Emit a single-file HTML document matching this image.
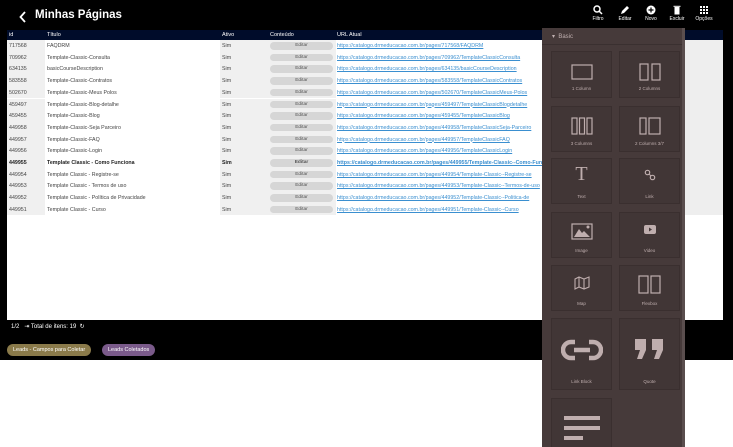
<!DOCTYPE html>
<html><head><meta charset="utf-8"><style>
*{margin:0;padding:0;box-sizing:border-box}
html,body{width:733px;height:447px;overflow:hidden}
body{background:#fff;font-family:"Liberation Sans",sans-serif;position:relative}
.top{position:absolute;left:0;top:0;width:733px;height:360px;background:#000}
.title{position:absolute;top:9px;color:#fff;font-size:11.5px;font-weight:bold}
.tb{position:absolute;top:5px;color:#fff;font-size:5px;text-align:center;width:24px}
.tb svg{display:block;margin:0 auto 1px}
.area{position:absolute;left:7px;top:30px;width:716px;height:290px;background:#fff}
.hdr{position:absolute;left:0;top:0;width:716px;height:10px;background:#000c2a;color:#fff;font-size:5.5px}
.hdr span,.row span{position:absolute;top:2px;white-space:nowrap}
.row{position:absolute;left:0;width:716px;height:11.7px;font-size:5.3px;color:#444}
.row span{top:3px}
.g{position:absolute;top:0;height:11.7px;background:#f0f0f0}
.btn{position:absolute;left:263px;top:2px;width:63px;height:7.5px;background:#d6d6d6;border-radius:4px;font-size:4.8px;text-align:center;line-height:7.5px;color:#555}
.u{color:#3a8fd0;text-decoration:underline}
.b{font-weight:bold;color:#222}
.panel{position:absolute;left:542px;top:28px;width:143px;height:419px;background:#463a3a;overflow:hidden}
.phd{position:absolute;left:0;top:2px;width:140px;height:15px;color:#c0b0b0;font-size:6px;line-height:15px;padding-left:10px;border-bottom:1px solid #3a3030}
.tile{position:absolute;width:61px;background:#413636;border:1px solid #3a2f2f;color:#bfaeae;font-size:4.5px;text-align:center}
.tile svg{position:absolute;left:50%;transform:translateX(-50%)}
.tile .l{position:absolute;width:100%;left:0}
.sb{position:absolute;left:682px;top:28px;width:3px;height:419px;background:#5a4e4e}
.pill{position:absolute;top:344px;height:12px;border-radius:6px;color:#fff;font-size:5.5px;line-height:12px;padding:0 6px}
</style></head><body>
<div class="top"></div>
<svg style="position:absolute;left:19px;top:11px" width="8" height="12"><path d="M6 1 L1.5 6 L6 11" stroke="#fff" stroke-width="1.8" fill="none"/></svg>
<div class="title" style="left:35px">Minhas Páginas</div>
<div class="tb" style="left:586px"><svg width="10" height="10"><circle cx="4" cy="4" r="3" stroke="#fff" stroke-width="1.5" fill="none"/><path d="M6 6L9 9" stroke="#fff" stroke-width="1.5"/></svg>Filtro</div>
<div class="tb" style="left:613px"><svg width="10" height="10"><path d="M1 9L2 6L7 1L9 3L4 8Z" fill="#fff"/></svg>Editar</div>
<div class="tb" style="left:639px"><svg width="10" height="10"><circle cx="5" cy="5" r="4.5" fill="#fff"/><path d="M5 2.5V7.5M2.5 5H7.5" stroke="#000" stroke-width="1.2"/></svg>Novo</div>
<div class="tb" style="left:665px"><svg width="10" height="10"><rect x="2.5" y="2" width="5" height="7.5" fill="#fff"/><rect x="1.5" y="0.8" width="7" height="1" fill="#fff"/></svg>Excluir</div>
<div class="tb" style="left:692px"><svg width="10" height="10" fill="#fff"><rect x="1" y="1" width="2" height="2"/><rect x="4" y="1" width="2" height="2"/><rect x="7" y="1" width="2" height="2"/><rect x="1" y="4" width="2" height="2"/><rect x="4" y="4" width="2" height="2"/><rect x="7" y="4" width="2" height="2"/><rect x="1" y="7" width="2" height="2"/><rect x="4" y="7" width="2" height="2"/><rect x="7" y="7" width="2" height="2"/></svg>Opções</div>
<div class="area">
<div style="position:absolute;left:678px;top:10px;width:38px;height:175px;background:#eee"></div>
<div class="hdr"><span style="left:2px">id</span><span style="left:40px">Título</span><span style="left:215px">Ativo</span><span style="left:263px">Conteúdo</span><span style="left:330px">URL Atual</span></div>
<div id="rows"></div>
</div>
<script>
var d=[["717568","FAQDRM","717568/FAQDRM"],["709962","Template-Classic-Consulta","709962/TemplateClassicConsulta"],["634135","basicCourseDescription","634135/basicCourseDescription"],["583558","Template-Classic-Contratos","583558/TemplateClassicContratos"],["502670","Template-Classic-Meus Polos","502670/TemplateClassicMeus-Polos"],["459497","Template-Classic-Blog-detalhe","459497/TemplateClassicBlogdetalhe"],["459455","Template-Classic-Blog","459455/TemplateClassicBlog"],["449958","Template-Classic-Seja Parceiro","449958/TemplateClassicSeja-Parceiro"],["449957","Template-Classic-FAQ","449957/TemplateClassicFAQ"],["449956","Template-Classic-Login","449956/TemplateClassicLogin"],["449955","Template Classic - Como Funciona","449955/Template-Classic--Como-Funciona"],["449954","Template Classic - Registre-se","449954/Template-Classic--Registre-se"],["449953","Template Classic - Termos de uso","449953/Template-Classic--Termos-de-uso"],["449952","Template Classic - Política de Privacidade","449952/Template-Classic--Politica-de"],["449951","Template Classic - Curso","449951/Template-Classic--Curso"]];
var h="";d.forEach(function(r,i){var b=i==10?" b":"";h+='<div class="row'+b+'" style="top:'+(10+i*11.7)+'px"><div class="g" style="left:0;width:38px"></div><div class="g" style="left:213px;width:46px"></div><div class="g" style="left:259px;width:70px"></div><span style="left:2px">'+r[0]+'</span><span style="left:40px">'+r[1]+'</span><span style="left:215px">Sim</span><div class="btn">Editar</div><span class="u" style="left:330px">https://catalogo.drmeducacao.com.br/pages/'+r[2]+'</span></div>'});
document.getElementById("rows").innerHTML=h;
</script>
<div style="position:absolute;left:11px;top:323px;color:#fff;font-size:6px">1/2 &nbsp; ⇥ Total de itens: 19 &nbsp;↻</div>
<div class="pill" style="left:7px;background:#8a7a4a">Leads - Campos para Coletar</div>
<div class="pill" style="left:102px;background:#7a5a8a">Leads Coletados</div>
<div class="panel">
<div class="phd">▾ &nbsp;Basic</div>
<div class="tile" style="left:9px;top:23px;height:47px"><svg style="top:12px" width="22" height="16"><rect x="1" y="1" width="20" height="14" fill="none" stroke="#bfaeae" stroke-width="1.2"/></svg><div class="l" style="top:34px">1 Column</div></div>
<div class="tile" style="left:77px;top:23px;height:47px"><svg style="top:11px" width="22" height="18"><rect x="1" y="1" width="8" height="16" fill="none" stroke="#bfaeae" stroke-width="1.2"/><rect x="13" y="1" width="8" height="16" fill="none" stroke="#bfaeae" stroke-width="1.2"/></svg><div class="l" style="top:34px">2 Columns</div></div>
<div class="tile" style="left:9px;top:78px;height:46px"><svg style="top:10px" width="22" height="18"><rect x="1" y="1" width="5" height="16" fill="none" stroke="#bfaeae" stroke-width="1.2"/><rect x="8.5" y="1" width="5" height="16" fill="none" stroke="#bfaeae" stroke-width="1.2"/><rect x="16" y="1" width="5" height="16" fill="none" stroke="#bfaeae" stroke-width="1.2"/></svg><div class="l" style="top:34px">3 Columns</div></div>
<div class="tile" style="left:77px;top:78px;height:46px"><svg style="top:10px" width="22" height="18"><rect x="1" y="1" width="6" height="16" fill="none" stroke="#bfaeae" stroke-width="1.2"/><rect x="10" y="1" width="11" height="16" fill="none" stroke="#bfaeae" stroke-width="1.2"/></svg><div class="l" style="top:34px">2 Columns 3/7</div></div>
<div class="tile" style="left:9px;top:130px;height:46px"><div class="l" style="top:4px;font-family:'Liberation Serif',serif;font-size:20px">T</div><div class="l" style="top:35px">Text</div></div>
<div class="tile" style="left:77px;top:130px;height:46px"><svg style="top:10px" width="12" height="12"><circle cx="3.5" cy="3.5" r="2.2" fill="none" stroke="#bfaeae" stroke-width="1.2"/><circle cx="8.5" cy="8.5" r="2.2" fill="none" stroke="#bfaeae" stroke-width="1.2"/><path d="M5 5L7 7" stroke="#bfaeae"/></svg><div class="l" style="top:35px">Link</div></div>
<div class="tile" style="left:9px;top:184px;height:46px"><svg style="top:10px" width="22" height="17"><rect x="1" y="1" width="20" height="15" fill="none" stroke="#bfaeae" stroke-width="1.2"/><path d="M3 14L8 6L11 10L13 8L19 14Z" fill="#bfaeae"/><circle cx="17" cy="4" r="1.5" fill="#bfaeae"/></svg><div class="l" style="top:35px">Image</div></div>
<div class="tile" style="left:77px;top:184px;height:46px"><svg style="top:12px" width="12" height="9"><rect x="0" y="0" width="12" height="9" rx="2" fill="#bfaeae"/><path d="M5 2.5L8 4.5L5 6.5Z" fill="#463a3a"/></svg><div class="l" style="top:35px">Video</div></div>
<div class="tile" style="left:9px;top:237px;height:46px"><svg style="top:10px" width="16" height="14"><path d="M1 3L5 1L10 3L15 1V11L10 13L5 11L1 13Z M5 1V11 M10 3V13" fill="none" stroke="#bfaeae" stroke-width="1.1"/></svg><div class="l" style="top:35px">Map</div></div>
<div class="tile" style="left:77px;top:237px;height:46px"><svg style="top:9px" width="24" height="19"><rect x="1" y="1" width="9" height="17" fill="none" stroke="#bfaeae" stroke-width="1.2"/><rect x="13" y="1" width="9" height="17" fill="none" stroke="#bfaeae" stroke-width="1.2"/></svg><div class="l" style="top:35px">Flexbox</div></div>
<div class="tile" style="left:9px;top:290px;height:72px"><svg style="top:20px" width="42" height="22"><path d="M14 3H10A8 8 0 0 0 10 19H14 M28 3H32A8 8 0 0 1 32 19H28 M13 11H29" fill="none" stroke="#bfaeae" stroke-width="4.5"/></svg><div class="l" style="top:60px">Link Block</div></div>
<div class="tile" style="left:77px;top:290px;height:72px"><svg style="top:19px" width="32" height="22"><path d="M1 1H12V12L8 21H3L6 12H1Z M18 1H29V12L25 21H20L23 12H18Z" fill="#bfaeae"/></svg><div class="l" style="top:60px">Quote</div></div>
<div class="tile" style="left:9px;top:370px;height:60px"><svg style="top:15px" width="38" height="26"><rect x="1" y="2" width="36" height="4" fill="#bfaeae"/><rect x="1" y="12" width="36" height="4" fill="#bfaeae"/><rect x="1" y="22" width="19" height="4" fill="#bfaeae"/></svg></div>
</div>
<div class="sb"></div>
</body></html>
